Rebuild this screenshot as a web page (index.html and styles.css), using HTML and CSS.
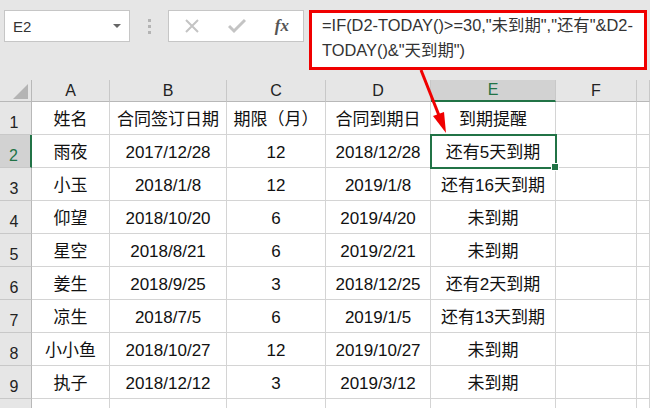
FILE: index.html
```html
<!DOCTYPE html>
<html lang="zh-CN">
<head>
    <meta charset="UTF-8">
    <title>到期提醒</title>
    <link rel="stylesheet" href="styles.css">
</head>
<body>
    <!-- 名称框 + 编辑栏 -->
    <div class="toolbar">
        <div class="name-box">
            <span>E2</span>
            <span class="caret"></span>
        </div>
        <div class="grip"><i></i><i></i><i></i></div>
        <div class="fx-buttons">
            <svg class="fx-icon" width="16" height="16" viewBox="0 0 16 16">
                <path d="M2 2 L14 14 M14 2 L2 14" stroke="#c4c4c4" stroke-width="2" fill="none"/>
            </svg>
            <svg class="fx-icon" width="18" height="16" viewBox="0 0 18 16">
                <path d="M1 8 L6 13 L17 2" stroke="#c4c4c4" stroke-width="3" fill="none"/>
            </svg>
            <span class="fx-label">fx</span>
        </div>
        <div class="formula">=IF(D2-TODAY()&gt;=30,"未到期","还有"&amp;D2-<br>TODAY()&amp;"天到期")</div>
    </div>

    <!-- 工作表 -->
    <div class="sheet">
        <div class="hd corner"><span class="corner-mark"></span></div>
        <div class="hd col">A</div>
        <div class="hd col">B</div>
        <div class="hd col">C</div>
        <div class="hd col">D</div>
        <div class="hd col sel">E</div>
        <div class="hd col">F</div>
        <div class="hd col"></div>

        <div class="hd row">1</div>
        <div class="cell">姓名</div><div class="cell">合同签订日期</div><div class="cell">期限（月）</div><div class="cell">合同到期日</div><div class="cell">到期提醒</div><div class="cell"></div><div class="cell"></div>

        <div class="hd row sel">2</div>
        <div class="cell">雨夜</div><div class="cell">2017/12/28</div><div class="cell">12</div><div class="cell">2018/12/28</div><div class="cell active">还有5天到期</div><div class="cell"></div><div class="cell"></div>

        <div class="hd row">3</div>
        <div class="cell">小玉</div><div class="cell">2018/1/8</div><div class="cell">12</div><div class="cell">2019/1/8</div><div class="cell">还有16天到期</div><div class="cell"></div><div class="cell"></div>

        <div class="hd row">4</div>
        <div class="cell">仰望</div><div class="cell">2018/10/20</div><div class="cell">6</div><div class="cell">2019/4/20</div><div class="cell">未到期</div><div class="cell"></div><div class="cell"></div>

        <div class="hd row">5</div>
        <div class="cell">星空</div><div class="cell">2018/8/21</div><div class="cell">6</div><div class="cell">2019/2/21</div><div class="cell">未到期</div><div class="cell"></div><div class="cell"></div>

        <div class="hd row">6</div>
        <div class="cell">姜生</div><div class="cell">2018/9/25</div><div class="cell">3</div><div class="cell">2018/12/25</div><div class="cell">还有2天到期</div><div class="cell"></div><div class="cell"></div>

        <div class="hd row">7</div>
        <div class="cell">凉生</div><div class="cell">2018/7/5</div><div class="cell">6</div><div class="cell">2019/1/5</div><div class="cell">还有13天到期</div><div class="cell"></div><div class="cell"></div>

        <div class="hd row">8</div>
        <div class="cell">小小鱼</div><div class="cell">2018/10/27</div><div class="cell">12</div><div class="cell">2019/10/27</div><div class="cell">未到期</div><div class="cell"></div><div class="cell"></div>

        <div class="hd row">9</div>
        <div class="cell">执子</div><div class="cell">2018/12/12</div><div class="cell">3</div><div class="cell">2019/3/12</div><div class="cell">未到期</div><div class="cell"></div><div class="cell"></div>

        <div class="hd row"></div>
        <div class="cell"></div><div class="cell"></div><div class="cell"></div><div class="cell"></div><div class="cell"></div><div class="cell"></div><div class="cell"></div>
    </div>

    <!-- 标注箭头 -->
    <svg class="arrow" width="650" height="408" viewBox="0 0 650 408">
        <path d="M421 70 L440 118" stroke="#f00000" stroke-width="3" fill="none"/>
        <polygon points="446,133 433,116 444,112" fill="#f00000"/>
    </svg>
</body>
</html>
```

FILE: styles.css
```css
* {
    margin: 0;
    padding: 0;
    box-sizing: border-box;
}

body {
    font-family: "Liberation Sans", "Noto Sans CJK SC", sans-serif;
    background: #e6e6e6;
    width: 650px;
    height: 408px;
    overflow: hidden;
    position: relative;
    color: #1a1a1a;
}

/* 编辑栏 */
.toolbar {
    height: 80px;
    display: flex;
    align-items: flex-start;
    padding: 10px 0 0 4px;
}

.name-box {
    width: 126px;
    height: 32px;
    background: white;
    border: 1px solid #c6c6c6;
    display: flex;
    align-items: center;
    justify-content: space-between;
    padding: 0 8px 0 8px;
    font-size: 15px;
    color: #333;
}

.caret {
    width: 0;
    height: 0;
    border-left: 4px solid transparent;
    border-right: 4px solid transparent;
    border-top: 4px solid #666;
}

.grip {
    width: 38px;
    height: 32px;
    display: flex;
    flex-direction: column;
    align-items: center;
    justify-content: center;
    gap: 3px;
}

.grip i {
    width: 3px;
    height: 3px;
    background: #b4b4b4;
}

.fx-buttons {
    width: 136px;
    height: 32px;
    background: white;
    border: 1px solid #c6c6c6;
    display: flex;
    align-items: center;
    justify-content: space-between;
    padding: 0 14px 0 15px;
}

.fx-label {
    font-family: "Liberation Serif", serif;
    font-style: italic;
    font-weight: bold;
    font-size: 17px;
    color: #555;
}

.formula {
    margin-left: 5px;
    width: 338px;
    height: 60px;
    background: white;
    border: 3px solid #f00000;
    padding: 0 0 0 10px;
    font-size: 16.4px;
    line-height: 25px;
    color: #333;
    white-space: nowrap;
}

/* 工作表 */
.sheet {
    display: grid;
    grid-template-columns: 32px 78px 117px 99px 105px 125px 81px 1fr;
    grid-template-rows: 22px repeat(10, 33px);
    background: white;
}

.hd {
    background: #e6e6e6;
    font-size: 16px;
    color: #222;
    display: flex;
    justify-content: center;
}

.hd.col {
    align-items: center;
    border-right: 1px solid #c8c8c8;
    border-bottom: 1px solid #b8b8b8;
}

.hd.row {
    align-items: flex-end;
    padding: 0 3px 2px 0;
    border-right: 1px solid #b8b8b8;
    border-bottom: 1px solid #c8c8c8;
}

.hd.col.sel {
    background: #d2d2d2;
    color: #217346;
    border-bottom: 2px solid #217346;
}

.hd.row.sel {
    background: #d2d2d2;
    color: #217346;
    border-right: 2px solid #217346;
}

.corner {
    border-right: 1px solid #b8b8b8;
    border-bottom: 1px solid #b8b8b8;
    align-items: flex-end;
    justify-content: flex-end;
    padding: 0 3px 2px 0;
}

.corner-mark {
    width: 15px;
    height: 15px;
    background: #b4b4b4;
    clip-path: polygon(100% 0, 100% 100%, 0 100%);
}

.cell {
    border-right: 1px solid #d4d4d4;
    border-bottom: 1px solid #d4d4d4;
    display: flex;
    align-items: flex-end;
    justify-content: center;
    padding-bottom: 4px;
    font-size: 17px;
    line-height: 20px;
    color: #111;
    white-space: nowrap;
}

.cell.active {
    position: relative;
    outline: 2px solid #217346;
    outline-offset: -1px;
}

.cell.active::after {
    content: "";
    position: absolute;
    right: -4px;
    bottom: -4px;
    width: 6px;
    height: 6px;
    background: #217346;
    border: 1px solid white;
}

/* 标注 */
.arrow {
    position: absolute;
    left: 0;
    top: 0;
    pointer-events: none;
}
```
